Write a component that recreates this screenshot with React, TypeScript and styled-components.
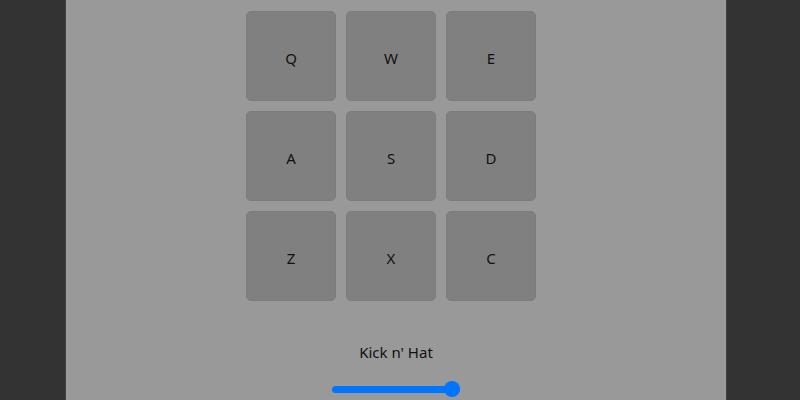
import React, { useState } from 'react'
import styled, { createGlobalStyle } from 'styled-components'

const GlobalStyle = createGlobalStyle`
  html, body {
    margin: 0;
    padding: 0;
    background: #333333;
    height: 100%;
    overflow: hidden;
  }
  body {
    font-family: "Noto Sans", "Open Sans", sans-serif;
  }
`

const Page = styled.div`
  display: flex;
  height: 400px;
  padding: 0 74px 0 66px;
  box-sizing: border-box;
`

const Machine = styled.div`
  flex: 1;
  background: #999999;
  box-shadow: 0 0 1px 0 #777;
  display: flex;
  flex-direction: column;
  align-items: center;
  padding-top: 11px;
`

const PadGrid = styled.div`
  display: flex;
  flex-wrap: wrap;
  width: 300px;
`

const Pad = styled.button<{ $active?: boolean }>`
  width: 90px;
  height: 90px;
  margin: 0 10px 10px 0;
  padding: 3px 0 0;
  border: 1px solid #7c7c7c;
  border-radius: 5px;
  background: ${(p) => (p.$active ? '#6f6f6f' : '#808080')};
  color: #111;
  font-family: inherit;
  font-size: 15px;
  display: flex;
  align-items: center;
  justify-content: center;
  cursor: pointer;
  box-sizing: border-box;
`

const Display = styled.p`
  margin: 31px 0 0;
  font-size: 15px;
  line-height: 20px;
  color: #111;
`

const Volume = styled.input`
  -webkit-appearance: none;
  appearance: none;
  width: 128px;
  height: 16px;
  margin: 19px 0 0;
  background: transparent;

  &::-webkit-slider-runnable-track {
    height: 7px;
    border-radius: 4px;
    background: #0075ff;
  }
  &::-webkit-slider-thumb {
    -webkit-appearance: none;
    width: 16px;
    height: 16px;
    margin-top: -4.5px;
    border-radius: 50%;
    background: #0075ff;
    border: none;
  }
`

const keys = ['Q', 'W', 'E', 'A', 'S', 'D', 'Z', 'X', 'C']

export default function App() {
  const [volume, setVolume] = useState(100)
  const [label, setLabel] = useState("Kick n' Hat")

  return (
    <>
      <GlobalStyle />
      <Page>
        <Machine>
          <PadGrid>
            {keys.map((k) => (
              <Pad key={k} onClick={() => setLabel(k)}>
                {k}
              </Pad>
            ))}
          </PadGrid>
          <Display>{label}</Display>
          <Volume
            type="range"
            min={0}
            max={100}
            value={volume}
            onChange={(e) => setVolume(Number(e.target.value))}
          />
        </Machine>
      </Page>
    </>
  )
}
